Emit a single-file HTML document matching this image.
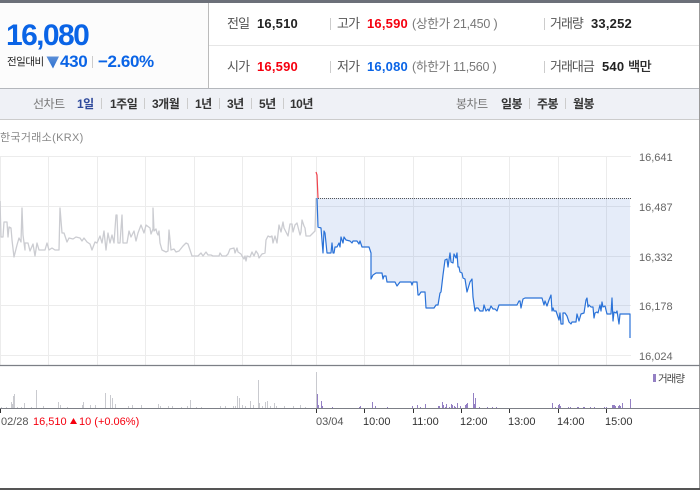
<!DOCTYPE html>
<html lang="ko"><head><meta charset="utf-8"><style>
html,body{margin:0;padding:0;background:#fff}
#p{position:relative;width:700px;height:490px;overflow:hidden;background:#fff;font-family:"Liberation Sans","Noto Sans CJK KR",sans-serif;font-size:13px;color:#222}
#p div,#p span.a{position:absolute;white-space:nowrap}
.t{line-height:16px;font-weight:700;color:#222}
.l{line-height:16px;color:#555;font-weight:400;letter-spacing:-.8px}
.n{letter-spacing:.2px}
.s{width:1px;background:#ccc}
.b{font-size:12px;letter-spacing:-.5px;font-weight:700;color:#333;line-height:16px}
.y{font-size:11px;color:#666;line-height:14px}
.x{font-size:11px;color:#333;line-height:14px}
</style></head><body><div id="p">
<div style="left:0;top:0;width:700px;height:3px;background:#6c7079"></div>
<div style="left:0;top:3px;width:208px;height:85px;background:#fcfcfc"></div>
<div style="left:208px;top:3px;width:1px;height:85px;background:#bbb"></div>
<div style="left:209px;top:45px;width:490px;height:1px;background:#e6e6e6"></div>
<div style="left:0;top:88px;width:700px;height:1px;background:#b4b7bc"></div>
<div style="left:0;top:89px;width:699px;height:30px;background:#eff1f6"></div>
<div style="left:0;top:119px;width:700px;height:1px;background:#ccc"></div>
<div style="left:699px;top:3px;width:1px;height:485px;background:#999"></div>
<div style="left:0;top:488px;width:700px;height:2px;background:#555"></div>

<div style="left:6px;top:18px;font-size:30px;line-height:36px;font-weight:700;color:#0a64e6;letter-spacing:-1.6px">16,080</div>
<div style="left:7px;top:55px;font-size:10.5px;line-height:14px;color:#222;letter-spacing:-.5px">전일대비</div>
<svg style="position:absolute;left:46px;top:55px" width="14" height="14"><defs><linearGradient id="tri" x1="0" y1="0" x2="0" y2="1"><stop offset="0" stop-color="#5b8fd8"/><stop offset="1" stop-color="#2b6fd0"/></linearGradient></defs><path d="M0.5 1.5H13L7 13.5Z" fill="url(#tri)"/></svg>
<div style="left:60px;top:52px;font-size:17px;line-height:20px;font-weight:700;color:#0a64e6;letter-spacing:-.3px">430</div>
<div class="s" style="left:92px;top:56px;height:12px"></div>
<div style="left:98px;top:52px;font-size:17px;line-height:20px;font-weight:700;color:#0a64e6;letter-spacing:-.4px">−2.60%</div>

<div class="l" style="left:227px;top:16px">전일</div><div class="t n" style="left:257px;top:16px">16,510</div>
<div class="l" style="left:227px;top:59px">시가</div><div class="t n" style="left:257px;top:59px;color:#f5000f">16,590</div>
<div class="s" style="left:330px;top:18px;height:12px"></div><div class="s" style="left:330px;top:61px;height:12px"></div>
<div class="l" style="left:337px;top:16px">고가</div><div class="t n" style="left:367px;top:16px;color:#f5000f">16,590</div>
<div class="l" style="left:337px;top:59px">저가</div><div class="t n" style="left:367px;top:59px;color:#0a64e6">16,080</div>
<div class="l" style="left:412px;top:16px;font-size:12.5px;color:#777;letter-spacing:-.2px">(상한가 21,450 )</div>
<div class="l" style="left:412px;top:59px;font-size:12.5px;color:#777;letter-spacing:-.2px">(하한가 11,560 )</div>
<div class="s" style="left:544px;top:18px;height:12px"></div><div class="s" style="left:544px;top:61px;height:12px"></div>
<div class="l" style="left:550px;top:16px;letter-spacing:-1px">거래량</div><div class="t n" style="left:591px;top:16px">33,252</div>
<div class="l" style="left:550px;top:59px;letter-spacing:-1px">거래대금</div><div class="t n" style="left:602px;top:59px">540 <span style="letter-spacing:-.5px;font-weight:400;-webkit-text-stroke:.3px #222">백만</span></div>

<div class="b" style="left:33px;top:96px;color:#777;font-weight:400">선차트</div>
<div class="b" style="left:77px;top:96px;color:#2f4a9c">1일</div>
<div class="s" style="left:101px;top:98px;height:11px"></div>
<div class="b" style="left:110px;top:96px">1주일</div>
<div class="s" style="left:144px;top:98px;height:11px"></div>
<div class="b" style="left:152px;top:96px">3개월</div>
<div class="s" style="left:187px;top:98px;height:11px"></div>
<div class="b" style="left:195px;top:96px">1년</div>
<div class="s" style="left:219px;top:98px;height:11px"></div>
<div class="b" style="left:227px;top:96px">3년</div>
<div class="s" style="left:251px;top:98px;height:11px"></div>
<div class="b" style="left:259px;top:96px">5년</div>
<div class="s" style="left:283px;top:98px;height:11px"></div>
<div class="b" style="left:290px;top:96px">10년</div>
<div class="b" style="left:456px;top:96px;color:#777;font-weight:400">봉차트</div>
<div class="b" style="left:501px;top:96px">일봉</div>
<div class="s" style="left:529px;top:98px;height:11px"></div>
<div class="b" style="left:537px;top:96px">주봉</div>
<div class="s" style="left:565px;top:98px;height:11px"></div>
<div class="b" style="left:573px;top:96px">월봉</div>

<div style="left:0;top:131px;font-size:11px;line-height:14px;color:#888;letter-spacing:.3px">한국거래소(KRX)</div>

<svg style="position:absolute;left:0;top:0" width="700" height="490">
<g stroke="#ececec" stroke-width="1" fill="none">
<path d="M0 156.5H631M0 206.5H631M0 256.5H631M0 305.5H631M0 355.5H631"/>
<path d="M0.5 156V365M48.5 156V365M97.5 156V365M145.5 156V365M194.5 156V365M242.5 156V365M291.5 156V365M316.5 156V365M364.5 156V365M413.5 156V365M461.5 156V365M509.5 156V365M558.5 156V365M606.5 156V365"/>
</g>
<polygon fill="#0046c8" fill-opacity=".1" points="317,198 630,198 630,314 620,314 619,324 617,311 616,313 614,312 613,321 612,298 611,314 607,314 605,306 603,307 602,302 601,311 600,305 597,312 595,313 594,318 593,307 589,305 588,307 587,298 586,300 584,313 581,314 579,321 577,314 576,322 572,322 571,324 569,322 567,316 565,313 563,313 563,324 561,324 560,313 559,320 556,311 553,308 552,311 551,295 549,300 547,306 545,301 544,305 542,298 525,298 523,299 521,308 519,301 517,305 499,305 497,311 495,309 493,309 491,306 489,311 488,309 486,311 484,305 483,311 480,311 478,308 476,308 475,311 473,297 472,279 470,282 467,292 465,279 463,278 462,273 460,272 459,267 458,267 457,253 456,258 454,254 453,263 451,262 450,253 448,267 445,260 443,275 441,292 440,293 438,305 436,305 434,308 426,308 425,292 421,292 419,295 418,295 417,282 413,282 412,285 411,282 400,282 397,286 395,282 387,282 386,276 384,276 383,279 382,273 376,273 373,275 371,279 371,253 369,247 362,247 360,241 359,244 357,241 353,241 352,243 350,241 346,240 344,237 343,243 341,237 340,247 339,243 337,247 335,247 334,253 333,253 332,243 331,253 327,253 325,233 324,231 323,253 321,228 318,227"/>
<path d="M316 198.5H631" stroke="#555" stroke-width="1" stroke-dasharray="1 1" fill="none"/>
<polyline fill="none" stroke="#cbccd1" stroke-width="1.3" stroke-linejoin="round" points="0,201 1,237 3,237 4,222 7,222 8,237 9,227 11,228 12,240 14,257 17,245 19,238 21,242 22,208 23,235 25,250 25,243 28,243 30,251 33,244 35,256 37,243 39,250 42,250 45,250 47,243 49,250 52,248 55,250 59,250 60,208 62,233 64,233 67,242 69,238 73,239 76,237 80,238 82,241 84,238 87,242 90,244 92,250 95,242 97,243 100,236 102,243 104,231 106,250 108,233 110,243 112,235 114,243 116,215 117,215 118,243 120,243 122,215 123,243 127,243 129,231 131,237 134,231 136,241 138,233 141,225 144,233 146,225 150,228 151,234 153,229 153,208 154,231 156,229 157,233 158,235 159,231 160,243 162,250 166,252 168,251 169,230 171,250 174,249 176,252 179,251 183,246 186,243 188,244 190,250 192,256 198,256 201,253 203,256 206,252 208,255 211,255 213,256 217,256 219,256 220,253 222,256 226,256 228,254 230,249 234,248 235,253 237,248 238,252 241,254 242,256 244,259 245,256 246,261 247,256 250,257 252,252 254,256 256,251 258,254 259,258 262,254 265,253 266,240 268,236 270,237 272,236 273,243 275,236 277,243 279,225 281,232 283,222 284,228 288,236 290,224 292,224 293,232 295,225 297,223 300,235 301,232 302,220 304,226 305,228 306,236 310,236 315,231 316,198"/>
<polyline fill="none" stroke="#f0424c" stroke-width="1.2" points="316,172 317,175 318,198"/>
<polyline fill="none" stroke="#2a72d8" stroke-width="1.2" stroke-linejoin="round" points="317,198 318,227 321,228 323,253 324,231 325,233 327,253 331,253 332,243 333,253 334,253 335,247 337,247 339,243 340,247 341,237 343,243 344,237 346,240 350,241 352,243 353,241 357,241 359,244 360,241 362,247 369,247 371,253 371,279 373,275 376,273 382,273 383,279 384,276 386,276 387,282 395,282 397,286 400,282 411,282 412,285 413,282 417,282 418,295 419,295 421,292 425,292 426,308 434,308 436,305 438,305 440,293 441,292 443,275 445,260 447,259 448,267 450,253 451,262 453,263 454,254 456,258 457,253 458,267 459,267 460,272 462,273 463,278 465,279 467,292 470,282 472,279 473,297 475,311 476,308 478,308 480,311 483,311 484,305 486,311 488,309 489,311 491,306 493,309 495,309 497,311 499,305 517,305 519,301 520,301 521,308 523,299 525,298 542,298 544,305 545,301 547,306 549,300 551,295 552,311 553,308 554,311 556,311 559,320 560,313 561,324 563,324 563,313 565,313 567,316 569,322 571,324 572,322 576,322 577,314 579,321 581,314 584,313 586,300 587,298 588,307 589,305 591,307 593,307 594,318 595,313 597,312 598,313 600,305 601,311 602,302 603,307 605,306 607,314 611,314 612,298 613,321 614,312 616,313 617,311 619,324 620,314 630,314 630,338"/>
<path d="M0 365.5H700" stroke="#7c7f86" stroke-width="1.2"/>
<path d="M1.5 408V407M6.5 408V407M11.5 408V402M12.5 408V404M13.5 408V396M14.5 408V394M17.5 408V407M21.5 408V407M24.5 408V403M31.5 408V407M36.5 408V390M43.5 408V406M58.5 408V402M60.5 408V405M67.5 408V407M83.5 408V402M82.5 408V405M90.5 408V405M95.5 408V405M105.5 408V393M110.5 408V395M112.5 408V398M115.5 408V404M128.5 408V406M132.5 408V405M141.5 408V405M158.5 408V404M160.5 408V406M168.5 408V406M172.5 408V406M181.5 408V407M187.5 408V406M190.5 408V400M196.5 408V407M201.5 408V407M220.5 408V406M225.5 408V406M233.5 408V406M235.5 408V406M237.5 408V396M239.5 408V398M242.5 408V405M245.5 408V406M250.5 408V401M253.5 408V405M258.5 408V380M259.5 408V403M262.5 408V406M265.5 408V402M267.5 408V401M270.5 408V406M274.5 408V403M276.5 408V406M284.5 408V406M293.5 408V406M300.5 408V405M305.5 408V407M316.5 408V372" stroke="#c9cacf" stroke-width="1"/>
<path d="M317.5 408V394M318.5 408V405M321.5 408V401M322.5 408V406M332.5 408V407M359.5 408V407M360.5 408V406M372.5 408V402M375.5 408V406M387.5 408V407M412.5 408V406M417.5 408V405M420.5 408V407M425.5 408V404M438.5 408V406M439.5 408V406M442.5 408V402M443.5 408V405M445.5 408V407M446.5 408V404M449.5 408V407M451.5 408V404M452.5 408V405M454.5 408V406M455.5 408V407M457.5 408V403M460.5 408V406M465.5 408V405M466.5 408V404M467.5 408V403M473.5 408V393M474.5 408V404M475.5 408V398M479.5 408V407M487.5 408V407M492.5 408V407M496.5 408V407M552.5 408V403M555.5 408V407M558.5 408V405M559.5 408V404M560.5 408V406M568.5 408V407M570.5 408V407M577.5 408V407M578.5 408V407M583.5 408V407M584.5 408V407M590.5 408V407M594.5 408V407M604.5 408V407M606.5 408V407M612.5 408V405M613.5 408V405M614.5 408V405M615.5 408V406M618.5 408V406M619.5 408V405M620.5 408V406M622.5 408V403M630.5 408V399" stroke="#9480c4" stroke-width="1"/>
<path d="M0 408.5H700" stroke="#7c7f86" stroke-width="1"/>
<path d="M0.5 409V413M316.5 409V413M364.5 409V413M413.5 409V413M461.5 409V413M509.5 409V413M558.5 409V413M606.5 409V413" stroke="#333" stroke-width="1"/>
<rect x="653" y="374" width="3" height="8" fill="#9480c4"/>
<path d="M73.5 418L77 424H70Z" fill="#f5000f"/>
</svg>

<div class="y" style="left:639px;top:151px">16,641</div>
<div class="y" style="left:639px;top:201px">16,487</div>
<div class="y" style="left:639px;top:251px">16,332</div>
<div class="y" style="left:639px;top:300px">16,178</div>
<div class="y" style="left:639px;top:350px">16,024</div>
<div style="left:658px;top:372px;font-size:10.5px;line-height:14px;color:#444;letter-spacing:-1px">거래량</div>
<div class="y" style="left:1px;top:415px;color:#555">02/28</div>
<div style="left:33px;top:415px;font-size:11px;line-height:14px;color:#f5000f">16,510</div>
<div style="left:79px;top:415px;font-size:11px;line-height:14px;color:#f5000f">10 (+0.06%)</div>
<div class="y" style="left:316px;top:415px;color:#555">03/04</div>
<div class="x" style="left:363px;top:415px">10:00</div>
<div class="x" style="left:412px;top:415px">11:00</div>
<div class="x" style="left:460px;top:415px">12:00</div>
<div class="x" style="left:508px;top:415px">13:00</div>
<div class="x" style="left:557px;top:415px">14:00</div>
<div class="x" style="left:605px;top:415px">15:00</div>
</div></body></html>
